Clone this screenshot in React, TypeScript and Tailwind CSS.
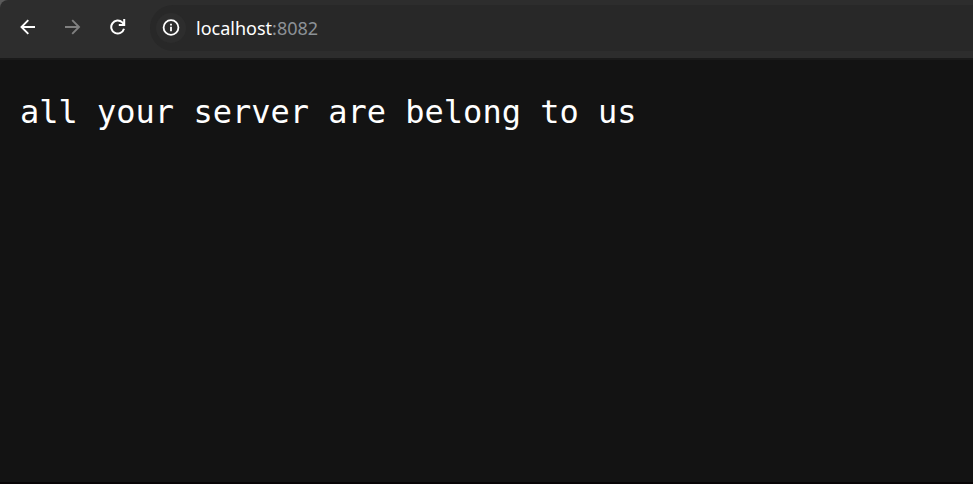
import React from "react";

function BackIcon() {
  return (
    <svg width="16" height="16" viewBox="0 0 16 16" fill="none" stroke="currentColor" strokeWidth="1.9" aria-hidden="true">
      <path d="M15 8H2M8.3 1.2L1.5 8l6.8 6.8" />
    </svg>
  );
}

function ForwardIcon() {
  return (
    <svg width="16" height="16" viewBox="0 0 16 16" fill="none" stroke="currentColor" strokeWidth="1.9" aria-hidden="true">
      <path d="M0 8H13.5M7.2 1.2L14 8l-6.8 6.8" />
    </svg>
  );
}

function ReloadIcon() {
  return (
    <svg width="16" height="16" viewBox="0 0 16 16" fill="none" stroke="currentColor" strokeWidth="2" aria-hidden="true">
      <path d="M14 9.8A6.5 6.5 0 1 1 12.3 3.4L14 5.2" />
      <path d="M14.2 0v5.9H8.8" />
    </svg>
  );
}

function InfoIcon() {
  return (
    <svg width="18" height="18" viewBox="0 0 18 18" fill="none" stroke="currentColor" strokeWidth="1.8" aria-hidden="true">
      <circle cx="9" cy="8.5" r="7.4" />
      <path d="M9 7.7v4.6M9 4.7v1.8" />
    </svg>
  );
}

const navButton = "flex size-8 items-center justify-center rounded-full";

export default function App() {
  return (
    <div className="flex min-h-screen flex-col border-b-2 border-[#080506] bg-[#131313] text-white">
      <div className="bg-[#5a5a5a]">
        <header className="flex items-center rounded-tl-lg border-b-2 border-[#1a1a1a] bg-[#2d2d2d] pt-[5px] pb-[7px] pl-3">
          <nav className="flex gap-[13px] pb-0.5">
            <button type="button" aria-label="Back" className={navButton}>
              <BackIcon />
            </button>
            <button type="button" aria-label="Forward" disabled className={`${navButton} text-[#808080]`}>
              <ForwardIcon />
            </button>
            <button type="button" aria-label="Reload" className={navButton}>
              <ReloadIcon />
            </button>
          </nav>
          <div className="ml-4 flex h-[46px] flex-1 items-center rounded-l-full bg-[#282828] pl-[6px]">
            <button
              type="button"
              aria-label="View site information"
              className="flex size-[30px] items-center justify-center rounded-full bg-[#2d2d2d]"
            >
              <InfoIcon />
            </button>
            <a href="#" className="ml-[10px] font-['Noto_Sans',sans-serif] text-[18px] leading-6">
              localhost<span className="text-[#8c9196]">:8082</span>
            </a>
          </div>
        </header>
      </div>
      <main className="px-5 py-8">
        <pre className="font-['DejaVu_Sans_Mono',monospace] text-[32px] leading-10 whitespace-pre-wrap">
          all your server are belong to us
        </pre>
      </main>
    </div>
  );
}
